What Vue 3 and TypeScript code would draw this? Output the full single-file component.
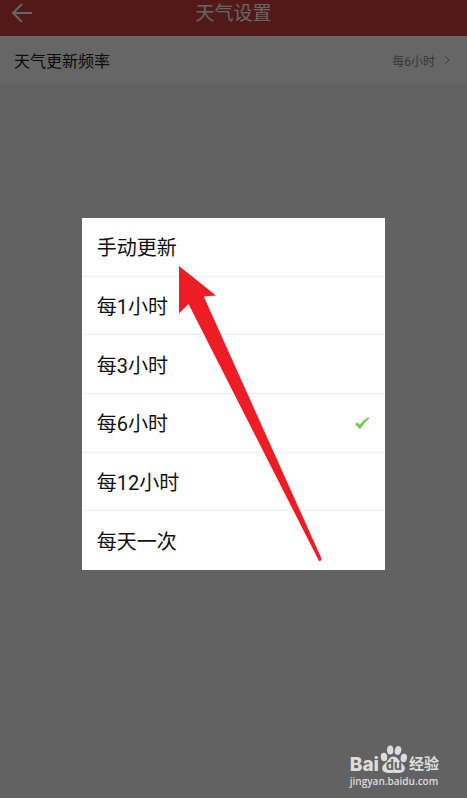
<script setup lang="ts">
import { ref } from 'vue'

const options: string[] = ['手动更新', '每1小时', '每3小时', '每6小时', '每12小时', '每天一次']
const selected = ref<string>('每6小时')
</script>

<template>
  <div class="screen">
    <header class="bar">
      <button class="back" type="button" aria-label="返回">
        <svg width="22" height="20" viewBox="0 0 22 20" fill="none" stroke="currentColor" stroke-width="2">
          <path d="M11 1 2 10l9 9M2 10h19" />
        </svg>
      </button>
      <h1 class="title">天气设置</h1>
    </header>

    <main>
      <button class="setting" type="button">
        <span class="name">天气更新频率</span>
        <span class="value">{{ selected }}</span>
        <svg class="chevron" width="6" height="10" viewBox="0 0 6 10" fill="none" stroke="currentColor">
          <path d="M1 1l4 4-4 4" />
        </svg>
      </button>
    </main>

    <div class="backdrop">
      <div class="dialog" role="dialog" aria-label="天气更新频率">
        <label v-for="option in options" :key="option" class="option">
          <input v-model="selected" class="radio" type="radio" name="frequency" :value="option" />
          <span>{{ option }}</span>
          <svg v-if="option === selected" class="tick" width="16" height="14" viewBox="0 0 16 14">
            <path d="M1 8.2Q2.4 6.2 4 7.2L5.8 8.8Q9.4 3.2 14.6 1.2L15.2 2.4Q10.2 6.4 6.6 12.8H5.2Q3.4 9.8 1 8.2Z" fill="#73cb55" />
          </svg>
        </label>
        <svg class="arrow" width="146" height="300" viewBox="0 0 146 300" aria-hidden="true">
          <path d="M1 0 38 29.5 25.8 30.5 143.5 292.5Q143.5 295.5 141 295L10.5 38 1 47.5Z" fill="#ee1c25" />
        </svg>
      </div>
    </div>

    <div class="watermark">
      <div class="brand">
        <span class="latin">Bai</span>
        <span class="paw">
          <svg width="28" height="30" viewBox="0 0 28 30" fill="currentColor">
            <ellipse cx="4" cy="13" rx="3.2" ry="4.2" transform="rotate(-8 4 13)" />
            <ellipse cx="10.2" cy="6" rx="3.2" ry="4.5" />
            <ellipse cx="18" cy="6.5" rx="3.2" ry="4.5" transform="rotate(14 18 6.5)" />
            <ellipse cx="23.8" cy="14" rx="3.2" ry="4.2" transform="rotate(10 23.8 14)" />
            <path d="M13.5 12.5C17 12.5 18 15.5 20.5 18 24 21 25.5 23 24.5 26 23 29.5 19 29 13.5 28.7 8 29 4 29.5 2.5 26 1.5 23 3 21 6.5 18 9 15.5 10 12.5 13.5 12.5Z" />
          </svg>
          <span class="du">du</span>
        </span>
        <span class="cjk">经验</span>
      </div>
      <div class="site">jingyan.baidu.com</div>
    </div>
  </div>
</template>

<style>
body {
  margin: 0;
}
</style>

<style scoped>
.screen {
  position: relative;
  min-height: 100vh;
  background: #f5f5f5;
  color: #222;
  font-family: Roboto, "Noto Sans CJK SC", sans-serif;
}

.bar {
  display: grid;
  grid-template-columns: 48px 1fr 48px;
  align-items: center;
  height: 26px;
  padding-bottom: 10px;
  background: #cd4040;
  color: #fff;
}

button {
  border: 0;
  background: none;
  color: inherit;
  font: inherit;
}

.back {
  display: flex;
  padding: 0 0 0 11px;
}

.title {
  margin: 0;
  padding-top: 2px;
  font-size: 19px;
  font-weight: 400;
  line-height: 24px;
  text-align: center;
}

.setting {
  display: flex;
  align-items: center;
  width: 100%;
  height: 48px;
  padding: 0 17px 0 14px;
  background: #fff;
  text-align: left;
}

.name {
  flex: 1;
  font-size: 16px;
}

.value {
  color: #888;
  font-size: 12px;
}

.chevron {
  margin-left: 9px;
  color: #999;
}

.backdrop {
  position: absolute;
  inset: 0;
  display: flex;
  align-items: center;
  justify-content: center;
  box-sizing: border-box;
  padding-bottom: 10px;
  background: rgba(0, 0, 0, 0.6);
}

.dialog {
  position: relative;
  display: grid;
  grid-auto-rows: 1fr;
  width: 65%;
  height: 352px;
  background: #fff;
  color: #111;
}

.option {
  display: flex;
  align-items: center;
  justify-content: space-between;
  padding: 0 15px;
  border-bottom: 1px solid #ececec;
  font-size: 20px;
}

.option:last-of-type {
  border-bottom-color: transparent;
}

.radio {
  position: absolute;
  width: 1px;
  height: 1px;
  margin: 0;
  opacity: 0;
}

.arrow {
  position: absolute;
  top: 48px;
  left: 96px;
  pointer-events: none;
}

.watermark {
  position: absolute;
  right: 28px;
  bottom: 10px;
  color: #dcdcdc;
}

.brand {
  display: flex;
  align-items: flex-end;
  gap: 1px;
  height: 30px;
}

.latin {
  font-family: Inter, sans-serif;
  font-size: 19px;
  font-weight: 800;
  line-height: 19px;
}

.paw {
  position: relative;
  display: flex;
}

.du {
  position: absolute;
  inset: 14px 0 0;
  color: #626262;
  font-size: 14px;
  font-weight: 700;
  line-height: 14px;
  text-align: center;
}

.cjk {
  font-size: 15px;
  font-weight: 700;
  line-height: 19px;
}

.site {
  font-family: "Open Sans", sans-serif;
  font-size: 10px;
  font-weight: 600;
  line-height: 14px;
}
</style>
